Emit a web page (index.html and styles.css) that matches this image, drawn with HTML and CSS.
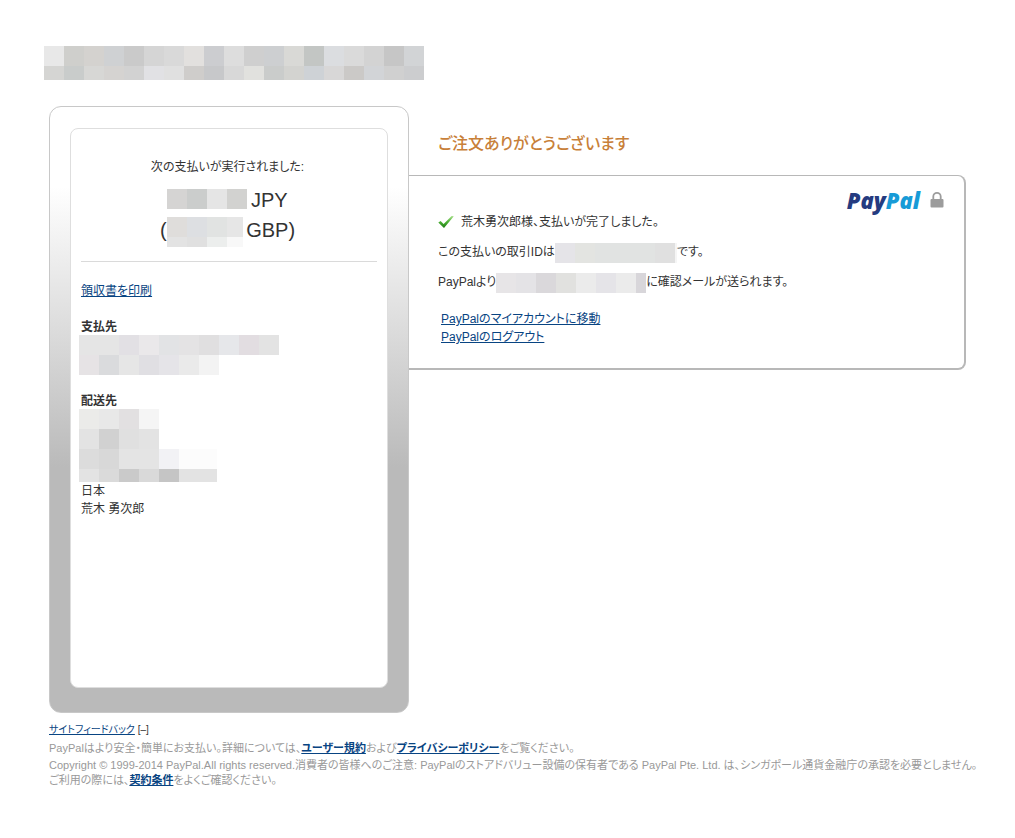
FILE: index.html
```html
<!DOCTYPE html>
<html lang="ja">
<head>
<meta charset="utf-8">
<title>PayPal</title>
<meta name="viewport" content="width=device-width, initial-scale=1">
<link rel="stylesheet" href="styles.css">
</head>
<body>
<header class="merchant" aria-hidden="true">
  <div class="merchant-row merchant-row-a"></div>
  <div class="merchant-row merchant-row-b"></div>
</header>
<main class="main">
  <aside class="summary">
    <div class="receipt">
      <div class="paid">
        <p class="paid-label">次の支払いが実行されました:</p>
        <p class="amount"><span class="mask mask-jpy"></span> JPY</p>
        <p class="amount">(<span class="mask mask-gbp"></span> GBP)</p>
      </div>
      <p class="print"><a class="link" href="#">領収書を印刷</a></p>
      <section class="party">
        <h2 class="party-title">支払先</h2>
        <div class="blocks">
          <div class="block payee-a"></div>
          <div class="block payee-b"></div>
        </div>
      </section>
      <section class="party">
        <h2 class="party-title">配送先</h2>
        <div class="blocks">
          <div class="block ship-a"></div>
          <div class="block ship-b"></div>
          <div class="block ship-c"></div>
          <div class="block ship-d"></div>
        </div>
        <p class="address">日本<br>荒木 勇次郎</p>
      </section>
    </div>
  </aside>
  <div class="content">
    <h1 class="title">ご注文ありがとうございます</h1>
    <section class="panel">
      <div class="brand">
        <span class="logo"><span class="logo-dark">Pay</span><span class="logo-light">Pal</span></span>
        <svg class="lock" viewBox="0 0 14 16" width="14" height="16" aria-hidden="true">
          <path d="M3.3 8V4.6a3.7 3.7 0 0 1 7.4 0V8" fill="none" stroke="#9c9c9c" stroke-width="1.8"/>
          <rect x="0.5" y="7" width="13" height="8.6" rx="1" fill="#9c9c9c"/>
        </svg>
      </div>
      <p class="line done">
        <svg class="check" viewBox="0 0 16 14" width="16" height="14" aria-hidden="true">
          <defs><linearGradient id="g" x1="0" y1="0" x2="0" y2="1"><stop offset="0" stop-color="#a9e08c"/><stop offset=".5" stop-color="#4bb034"/><stop offset="1" stop-color="#1c7a12"/></linearGradient></defs>
          <path d="M0.3 7.6 2.6 6 5.6 9 13.6 1 15.8 1.2 6 13z" fill="url(#g)"/>
        </svg>
        <span>荒木勇次郎様、支払いが完了しました。</span>
      </p>
      <p class="line">この支払いの取引IDは<span class="mask mask-id"></span>です。</p>
      <p class="line">PayPalより<span class="mask mask-mail"></span>に確認メールが送られます。</p>
      <ul class="actions">
        <li><a class="link" href="#">PayPalのマイアカウントに移動</a></li>
        <li><a class="link" href="#">PayPalのログアウト</a></li>
      </ul>
    </section>
  </div>
</main>
<footer class="footer">
  <p class="foot-line feedback"><a class="link" href="#">サイトフィードバック</a> [–]</p>
  <p class="foot-line">PayPalはより安全・簡単にお支払い。詳細については、<a class="link strong" href="#">ユーザー規約</a>および<a class="link strong" href="#">プライバシーポリシー</a>をご覧ください。</p>
  <p class="legal">Copyright © 1999-2014 PayPal.All rights reserved.消費者の皆様へのご注意: PayPalのストアドバリュー設備の保有者である PayPal Pte. Ltd. は、シンガポール通貨金融庁の承認を必要としません。<br>ご利用の際には、<a class="link strong" href="#">契約条件</a>をよくご確認ください。</p>
</footer>
</body>
</html>
```
FILE: styles.css
```css
* { box-sizing: border-box; }
body {
  margin: 0;
  padding: 46px 29px 48px 49px;
  background: #fff;
  color: #333;
  font: 12px/18px "Liberation Sans", "Noto Sans CJK JP", sans-serif;
  font-feature-settings: "palt";
}
p, h1, h2, ul { margin: 0; padding: 0; }
.link { color: #084482; text-decoration: underline; }

/* Masked merchant banner */
.merchant { width: 380px; margin: 0 0 26px -5px; }
.merchant-row-a {
  height: 20px;
  background: linear-gradient(90deg, #e8e8e8 20px, #cfcfcc 0 40px, #d4d2cf 0 60px, #cfd1d3 0 80px, #cacaca 0 100px, #d5d5d5 0 120px, #d9d9d9 0 140px, #e2e0de 0 160px, #cccdd0 0 180px, #dddddd 0 200px, #cfcfcf 0 220px, #cdcfd1 0 240px, #d9d9d6 0 260px, #c3c6c4 0 280px, #dbdde0 0 300px, #dadada 0 320px, #d3d3d3 0 340px, #c6c6c6 0 360px, #d2d4d6 0);
}
.merchant-row-b {
  height: 14px;
  background: linear-gradient(90deg, #d5d5d3 20px, #c9cccb 0 40px, #d7d7d5 0 60px, #d5d3d1 0 80px, #d2d2d2 0 100px, #e1e1e4 0 120px, #e0e0e0 0 140px, #cfcdcb 0 160px, #c7c8ca 0 180px, #d8d8d8 0 200px, #e1e1de 0 220px, #cacccb 0 240px, #d3d3d0 0 260px, #ced2d6 0 280px, #d8d7d7 0 300px, #cbc9c7 0 320px, #d2d4d7 0 340px, #d0d0d0 0 360px, #cccdcf 0);
}

.main { display: flex; align-items: flex-start; margin-right: 20px; }

/* Payment summary */
.summary {
  flex: 0 0 360px;
  padding: 21px 20px 24px;
  border: 1px solid #c8c8c8;
  border-radius: 12px;
  background: linear-gradient(#fff 80px, #bababa 360px);
}
.receipt {
  min-height: 560px;
  padding: 29px 10px 28px;
  border: 1px solid #dedede;
  border-radius: 8px;
  background: #fff;
}
.paid { padding: 0 3px 14px 0; border-bottom: 1px solid #dadada; text-align: center; }
.paid-label { margin-bottom: 9px; }
.amount { font-size: 20px; line-height: 30px; }
.print { margin: 20px 0 19px; }
.party { margin-bottom: 18px; }
.party-title { font-size: 12px; line-height: 16px; font-weight: bold; }
.blocks { margin-left: -2px; }
.block { height: 20px; }
.payee-a { width: 200px; background: linear-gradient(90deg, #e5e5e5 40px, #e2e0e4 0 60px, #eae8ea 0 80px, #e2e3e5 0 100px, #e4e3e4 0 120px, #e0dfe0 0 140px, #e6e7ea 0 160px, #e2dde1 0 180px, #e3e3e3 0); }
.payee-b { width: 140px; background: linear-gradient(90deg, #e6e3e5 20px, #dadbdd 0 40px, #e6e6e6 0 60px, #e0dfe3 0 80px, #e5e4e8 0 100px, #eaeaea 0 120px, #f3f3f3 0); }
.ship-a { width: 80px; background: linear-gradient(90deg, #ebebe9 20px, #e8e8e8 0 40px, #e2e0e1 0 60px, #f5f5f5 0); }
.ship-b { width: 80px; background: linear-gradient(90deg, #e3e3e3 20px, #d1d1d1 0 40px, #e0e0e0 0 60px, #e3e3e3 0); }
.ship-c { width: 138px; background: linear-gradient(90deg, #dcdcdc 20px, #d8d8d8 0 40px, #e4e4e4 0 80px, #f2f2f5 0 100px, #fcfcfc 0); }
.ship-d { width: 138px; height: 13px; background: linear-gradient(90deg, #e3e3e3 20px, #dadada 0 40px, #cacaca 0 60px, #d9d9d9 0 80px, #c5c5c5 0 100px, #e3e3e3 0); }

/* Inline masked values */
.mask { display: inline-block; height: 20px; vertical-align: middle; }
.amount .mask { margin-right: -2px; }
.mask-jpy { width: 80px; vertical-align: -2px; background: linear-gradient(90deg, #d5d4d3 20px, #cbcdcc 0 40px, #e5e5e5 0 60px, #d2d2d0 0); }
.mask-gbp {
  width: 76px;
  height: 30px;
  background:
    linear-gradient(90deg, #dfdddb 20px, #dddfe2 0 40px, #e1e3e2 0 60px, #e6e6e6 0) 0 0 / 100% 20px no-repeat,
    linear-gradient(90deg, #e3e3e3 20px, #e0e0e0 0 40px, #eceeed 0 60px, #f8f8f8 0);
}
.mask-id { width: 122px; background: linear-gradient(90deg, #e5e4e8 20px, #e3e4e1 0 40px, #e1e3e2 0 100px, #e0e0e0 0 120px, #f5f5f5 0); }
.mask-mail { width: 150px; background: linear-gradient(90deg, #e7e5e7 20px, #e4e3e6 0 40px, #dad8db 0 60px, #e1e1df 0 80px, #ebebeb 0 100px, #e5e4e8 0 120px, #ebebeb 0 140px, #d8d6da 0); }

/* Confirmation */
.content { flex: 1; min-width: 0; }
.title {
  padding: 26px 29px 19px;
  color: #c88039;
  font-size: 16px;
  line-height: 24px;
  font-weight: 500;
}
.panel {
  padding: 14px 20px 22px 29px;
  border: 1px solid #b8b8b8;
  border-width: 1px 2px 2px 0;
  border-radius: 0 8px 8px 0;
}
.brand { display: flex; justify-content: flex-end; align-items: center; gap: 10px; height: 20px; }
.logo { font: italic 800 22px/20px "Open Sans", sans-serif; }
.logo-dark { color: #253b80; }
.logo-light { color: #179bd7; }
.line { line-height: 30px; }
.done { display: flex; align-items: center; gap: 7px; line-height: 20px; margin: 2px 0 5px; }
.actions { margin: 13px 0 0 3px; list-style: none; }

/* Footer */
.footer { margin-top: 9px; color: #999; font-size: 11px; line-height: 16px; }
.feedback { color: #333; margin-bottom: 2px; font-size: 10px; }
.strong { font-weight: bold; }
.legal { margin-top: 2px; line-height: 15px; }
```
